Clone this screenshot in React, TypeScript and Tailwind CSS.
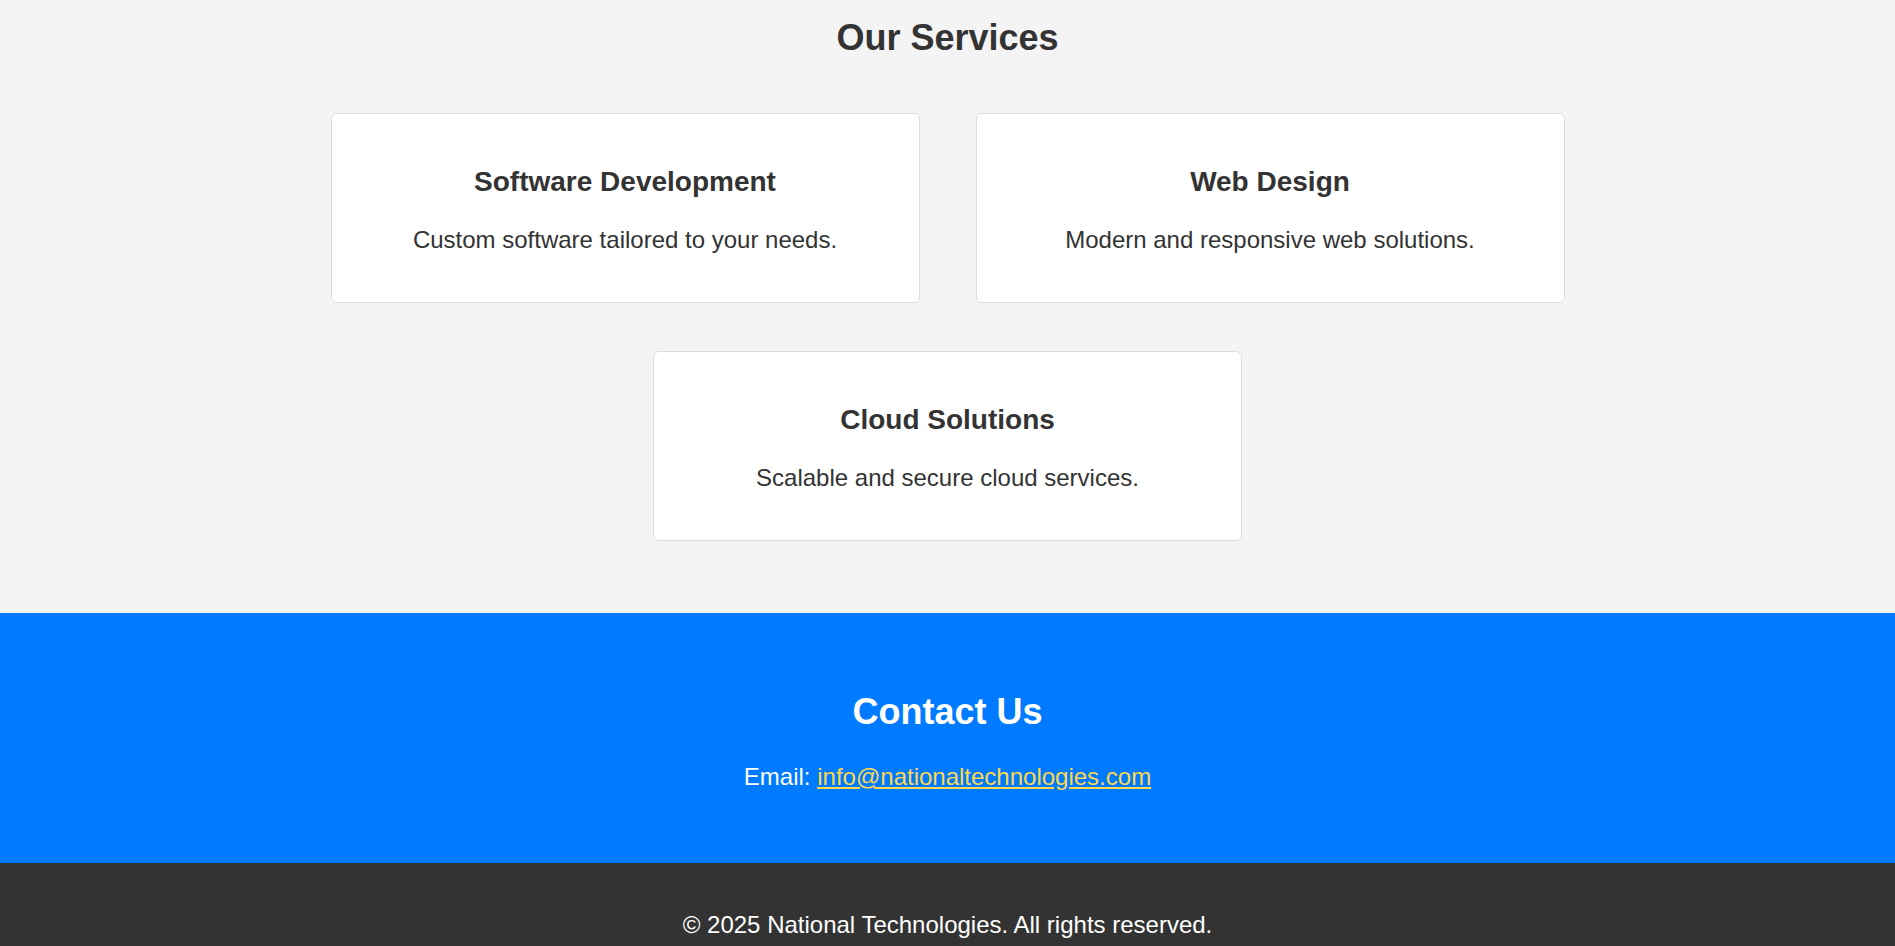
const services = [
  { title: "Software Development", text: "Custom software tailored to your needs." },
  { title: "Web Design", text: "Modern and responsive web solutions." },
  { title: "Cloud Solutions", text: "Scalable and secure cloud services." },
];

const App = () => {
  return (
    <div className="min-h-screen bg-[#f4f4f4] text-[#333] font-['Liberation_Sans',Arial,sans-serif]">
      <section className="pt-[17px] pb-[72px]">
        <h2 className="text-center text-[36px] leading-[41px] font-bold">Our Services</h2>
        <div className="flex flex-wrap justify-center gap-x-[56px] gap-y-[48px] mt-[55px] px-[330px]">
          {services.map((s) => (
            <div
              key={s.title}
              className="w-[589px] bg-white border border-[#dddddd] rounded-[6px] text-center pt-[52px] pb-[48px]"
            >
              <h3 className="text-[28px] leading-[32px] font-bold">{s.title}</h3>
              <p className="text-[24px] leading-[28px] mt-[28px]">{s.text}</p>
            </div>
          ))}
        </div>
      </section>

      <section className="bg-[#007bff] text-white text-center h-[250px] pt-[78px]">
        <h2 className="text-[36px] leading-[41px] font-bold">Contact Us</h2>
        <p className="text-[24px] leading-[28px] mt-[31px]">
          Email:{" "}
          <a href="#" className="text-[#ffd74a] underline">
            info@nationaltechnologies.com
          </a>
        </p>
      </section>

      <footer className="bg-[#333333] text-white text-center pt-[48px] pb-[47px]">
        <p className="text-[24px] leading-[28px]">© 2025 National Technologies. All rights reserved.</p>
      </footer>
    </div>
  );
};

export default App;
